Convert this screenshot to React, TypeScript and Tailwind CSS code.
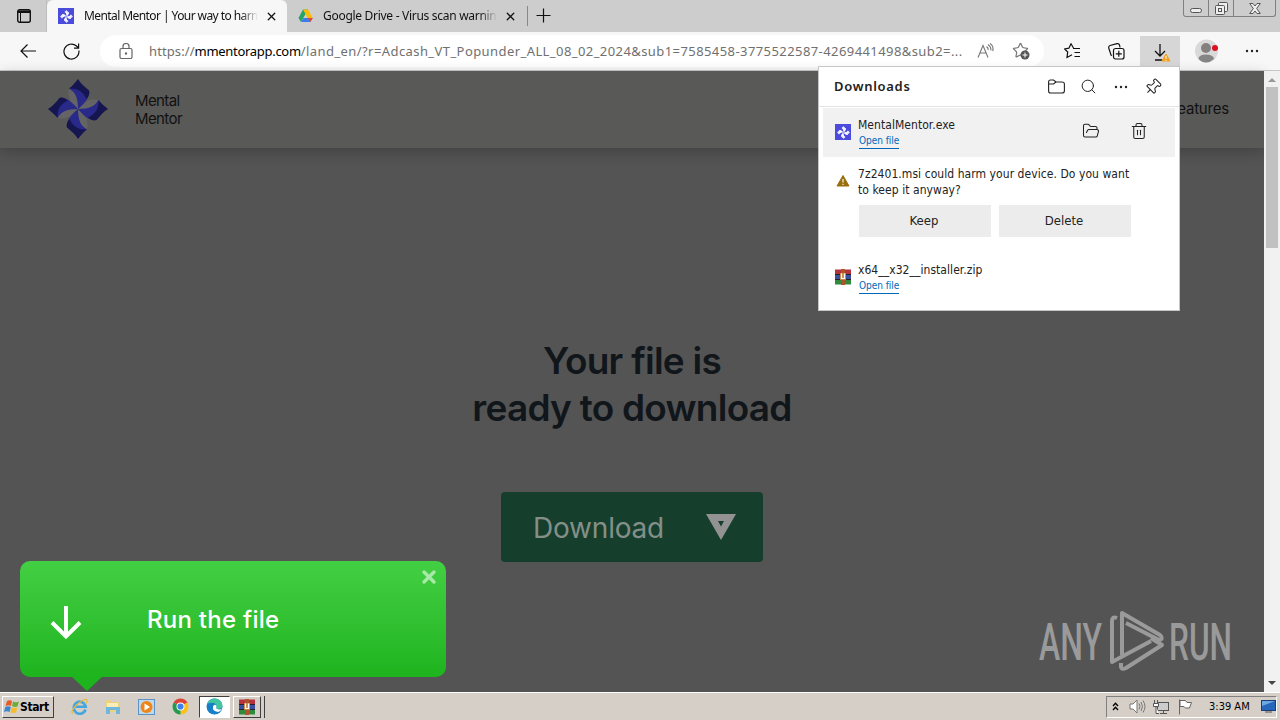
import { FolderOpen, Pin, Search, Star, Trash2, X } from "lucide-react";

const BLADES = [0, 90, 180, 270];

function Pinwheel({ size, light, mid, dark }: { size: number; light: string; mid: string; dark: string }) {
  return (
    <svg width={size} height={size} viewBox="0 0 60 60">
      {BLADES.map((angle) => (
        <path key={angle} transform={`rotate(${angle} 30 30)`} d="M21 9C19.5 17 21 23 30 30C32 20 29 13 21 9Z" fill={light} />
      ))}
      {BLADES.map((angle) => (
        <g key={angle} transform={`rotate(${angle} 30 30)`}>
          <path d="M21 9.5C27 13 30 18 30 30C36 25 42 19 41 11.5L30 6Z" fill={mid} />
          <path d="M30 0C27.5 3 24.5 7 21 9.5C29 9 35 12 38.5 20C41 17 42 14 41 11.5C37 8 32 4 30 0Z" fill={dark} />
        </g>
      ))}
    </svg>
  );
}

function MentorBadge() {
  return (
    <div className="flex h-4 w-4 shrink-0 items-center justify-center bg-[#4b4bdc]">
      <Pinwheel size={13} light="#4b4bdc" mid="#ffffff" dark="#e8e8ff" />
    </div>
  );
}

function DriveIcon() {
  return (
    <svg width="15" height="14" viewBox="0 0 15 14" className="shrink-0">
      <path d="M5 0.5H10L7.5 5L3 13L0.5 9Z" fill="#22a565" />
      <path d="M5 0.5H10L14.7 9H9.7Z" fill="#fbbc04" />
      <path d="M3 13L5.5 9H14.7L12.3 13Z" fill="#3b7ded" />
      <path d="M12.3 13L9.8 9H14.7Z" fill="#ea4335" />
    </svg>
  );
}

function WinRarIcon({ size }: { size: number }) {
  return (
    <svg width={size} height={size} viewBox="0 0 16 16">
      <path d="M0 0.5H16V5H0Z" fill="#b5333c" />
      <path d="M0 6H16V10H0Z" fill="#3c4f9e" />
      <path d="M0 11H16V15.5H0Z" fill="#2f8a3c" />
      <path d="M0 5H16V6H0ZM0 10H16V11H0Z" fill="#26222a" />
      <path d="M6 0H10V16H6Z" fill="#b0532a" />
      <path d="M5 4H11V11H5Z" fill="#c98548" />
      <path d="M6.5 4.5V9.5H9.5V4.5" fill="none" stroke="#fff" strokeWidth="1.2" />
    </svg>
  );
}

function WarningIcon({ size, fill }: { size: number; fill: string }) {
  return (
    <svg width={size} height={size} viewBox="0 0 14 14">
      <path d="M7 1.5L13 12H1Z" fill={fill} stroke={fill} strokeLinejoin="round" />
      <path d="M7 5V8.5M7 9.8V11" stroke="#fff" strokeWidth="1.1" />
    </svg>
  );
}

function TabStrip() {
  return (
    <div className="flex h-8 shrink-0 bg-[#cdcdcd] text-[12px] text-[#111]">
      <div className="flex w-[47px] items-center justify-center border-r border-[#bdbdbd] pl-px">
        <svg width="14" height="14" viewBox="0 0 14 14">
          <rect x="0.7" y="0.7" width="12.6" height="12.6" rx="2" fill="none" stroke="#111" strokeWidth="1.4" />
          <path d="M1 1.5H13V4H4V13H3V4H1Z" fill="#111" />
        </svg>
      </div>
      <div className="flex w-[240px] items-center rounded-t-md bg-[#f7f7f7] pl-[11px]">
        <MentorBadge />
        <span className="ml-[10px] w-[174px] overflow-hidden whitespace-nowrap bg-gradient-to-r from-[#111] from-90% to-transparent bg-clip-text tracking-[-0.58px] text-transparent">
          Mental Mentor | Your way to harm
        </span>
        <X size={13} strokeWidth={2.4} className="ml-[7px] shrink-0" />
      </div>
      <div className="flex w-[240px] items-center pl-[11px]">
        <DriveIcon />
        <span className="ml-[10px] w-[174px] overflow-hidden whitespace-nowrap bg-gradient-to-r from-[#111] from-90% to-transparent bg-clip-text tracking-[-0.29px] text-transparent">
          Google Drive - Virus scan warnin
        </span>
        <X size={13} strokeWidth={2.4} className="ml-[7px] shrink-0" />
      </div>
      <div className="mt-[6px] h-5 w-px bg-[#888]" />
      <svg width="15" height="15" viewBox="0 0 15 15" className="mt-2 ml-2">
        <path d="M7.5 0.5V14.5M0.5 7.5H14.5" stroke="#111" strokeWidth="1.2" />
      </svg>
      <div className="mr-1 ml-auto flex h-[17px] w-[93px] rounded-b-[3px] border border-t-0 border-[#808080]">
        <div className="flex w-[25px] justify-center border-r border-[#808080]">
          <div className="mt-2 h-[5px] w-3 rounded-sm border border-[#555] bg-[#eee]" />
        </div>
        <div className="flex w-[25px] justify-center border-r border-[#808080]">
          <svg width="13" height="13" viewBox="0 0 13 13" className="mt-[2px]" fill="#eee" stroke="#555">
            <rect x="3.5" y="0.5" width="9" height="9" rx="1" />
            <rect x="0.5" y="3.5" width="9" height="9" rx="1" />
            <rect x="3.5" y="6.5" width="3" height="3" />
          </svg>
        </div>
        <div className="flex flex-1 justify-center">
          <svg width="12" height="11" viewBox="0 0 12 11" className="mt-[3px]">
            <path d="M0.7 0.5H4L6 3L8 0.5H11.3L7.7 5.5L11.3 10.5H8L6 8L4 10.5H0.7L4.3 5.5Z" fill="#eee" stroke="#555" />
          </svg>
        </div>
      </div>
    </div>
  );
}

function Dots() {
  return (
    <svg width="14" height="4" viewBox="0 0 14 4" fill="#222">
      <circle cx="2" cy="2" r="1.2" />
      <circle cx="7" cy="2" r="1.2" />
      <circle cx="12" cy="2" r="1.2" />
    </svg>
  );
}

function Toolbar() {
  return (
    <div className="flex h-[39px] shrink-0 items-center border-b border-[#c8c8c8] bg-[#f7f7f7] text-[#111]">
      <svg width="17" height="14" viewBox="0 0 17 14" className="ml-5" fill="none" stroke="#111" strokeWidth="1.2">
        <path d="M16 7H1M7.5 0.5L1 7L7.5 13.5" />
      </svg>
      <svg width="17" height="17" viewBox="0 0 17 17" className="ml-[26px]" fill="none" stroke="#111" strokeWidth="1.2">
        <path d="M15.9 7.5A7.5 7.5 0 1 1 13.5 3L15.5 5M15.6 0.5V5.2H11" />
      </svg>
      <div className="ml-5 flex h-8 w-[944px] items-center rounded-full bg-white">
        <svg width="14" height="16" viewBox="0 0 14 16" className="ml-[19px]" fill="none" stroke="#666" strokeWidth="1.2">
          <rect x="1" y="5.5" width="12" height="10" rx="1.5" />
          <path d="M4 5.5V3.5A3 3 0 0 1 10 3.5V5.5" />
          <circle cx="7" cy="10.5" r="0.6" fill="#666" />
        </svg>
        <span className="ml-[16px] w-[817px] pt-px text-[13px] tracking-[0.42px] whitespace-nowrap text-[#707070]">
          <span className="tracking-[0.1px]">https://</span>
          <span className="tracking-[-0.3px] text-black">mmentorapp.com</span>
          /land_en/?r=Adcash_VT_Popunder_ALL_08_02_2024&amp;sub1=7585458-3775522587-4269441498&amp;sub2=...
        </span>
        <svg width="18" height="16" viewBox="0 0 18 16" className="ml-[11px]" fill="none" stroke="#777" strokeWidth="1.1">
          <path d="M1 14.5L6 2.5L11 14.5M2.8 10H9.2M9.5 3.5Q11.5 5 11.2 7M11 1.5Q14.5 4 13.8 7.5M13 0.5Q17 3 15.7 8" />
        </svg>
        <div className="ml-[17px] flex">
          <Star size={17} strokeWidth={1.7} color="#777" />
          <svg width="10" height="10" viewBox="0 0 10 10" className="mt-2 -ml-[9px]">
            <circle cx="5" cy="5" r="4.5" fill="#555" />
            <path d="M5 2.5V7.5M2.5 5H7.5" stroke="#fff" />
          </svg>
        </div>
      </div>
      <svg width="17" height="16" viewBox="0 0 17 16" className="ml-5" fill="none" stroke="#111" strokeWidth="1.2">
        <path d="M9.5 5L7 0.8L4.9 5.2L0.6 5.9L3.7 9L3 14.5L8 11.7M9 5.5H16M10.5 9.5H16M10.5 13.5H16" />
      </svg>
      <svg width="17" height="17" viewBox="0 0 17 17" className="ml-[27px]" fill="none" stroke="#111" strokeWidth="1.2">
        <path d="M4 12.5L3 12L0.7 5Q0.5 3 2 2.5L9 0.7Q11 0.3 11.5 2L12 4.5" />
        <rect x="5.5" y="5.5" width="10.5" height="10.5" rx="2" fill="#f7f7f7" />
        <path d="M10.8 7.7V13.8M7.8 10.8H13.8" />
      </svg>
      <div className="ml-[15px] flex h-[34px] w-10 items-center justify-center self-end bg-[#d6d6d6] pl-[3px]">
        <svg width="18" height="20" viewBox="0 0 18 20" fill="none">
          <path d="M7 1V13M2 8L7 13L12 8M2 17H9" stroke="#111" strokeWidth="1.3" />
          <path d="M13 11L17 18H9Z" fill="#f5a01d" stroke="#f5a01d" strokeLinejoin="round" />
          <path d="M13 13V16M13 17V18" stroke="#fff" />
        </svg>
      </div>
      <svg width="24" height="24" viewBox="0 0 24 24" className="ml-[15px]">
        <circle cx="11.5" cy="12" r="11.5" fill="#d9d9d9" />
        <circle cx="11" cy="9" r="5" fill="#858080" />
        <path d="M3.5 20Q3.5 15.5 11 15.5T19 20Q15 23.5 11 23.5T3.5 20Z" fill="#858585" />
        <circle cx="20" cy="9" r="3" fill="#dc1020" />
      </svg>
      <div className="ml-[26px] flex">
        <Dots />
      </div>
    </div>
  );
}

function OpenFile() {
  return (
    <span className="ml-px w-[40px] whitespace-nowrap border-b border-[#0067b8] text-[10px] leading-[15px] tracking-[-0.05px] text-[#0067b8]">
      Open file
    </span>
  );
}

function DownloadsPanel() {
  return (
    <div className="absolute top-[66px] left-[818px] h-[245px] w-[362px] border border-[#c6c6c6] bg-white font-['DejaVu_Sans_Condensed','DejaVu_Sans',sans-serif] text-[12px] text-[#222]">
      <div className="flex h-10 items-center border-b border-[#e4e4e4] pl-[15px]">
        <span className="w-[214px] pt-px font-['Noto_Sans',sans-serif] text-[13px] font-semibold tracking-[0.7px]">Downloads</span>
        <svg width="17" height="15" viewBox="0 0 17 15" fill="none" stroke="#222" strokeWidth="1.1">
          <path d="M0.6 3Q0.6 1 2.5 1H5.5L8 3H14Q16.4 3 16.4 5V12Q16.4 14 14 14H2.5Q0.6 14 0.6 12ZM0.6 5H5.5L8 3" />
        </svg>
        <Search size={17} strokeWidth={1.4} className="ml-[15px]" />
        <div className="ml-[17px] flex">
          <Dots />
        </div>
        <Pin size={18} strokeWidth={1.4} className="ml-4 rotate-45" />
      </div>
      <div className="mx-1 mt-px flex h-[49px] items-center bg-[#f1f1f1] pl-3">
        <div className="-mt-px">
          <MentorBadge />
        </div>
        <div className="ml-[7px] flex w-[224px] flex-col">
          <span className="leading-4 tracking-[0.05px]">MentalMentor.exe</span>
          <OpenFile />
        </div>
        <FolderOpen size={18} strokeWidth={1.4} className="-mt-[3px]" />
        <Trash2 size={18} strokeWidth={1.4} className="-mt-[3px] ml-[30px]" />
      </div>
      <div className="mt-[9px] flex pl-[17px]">
        <div className="mt-2 w-[22px]">
          <WarningIcon size={14} fill="#986f0b" />
        </div>
        <div>
          <p className="leading-4 tracking-[0.06px] whitespace-nowrap">
            7z2401.msi could harm your device. Do you want
            <br />
            to keep it anyway?
          </p>
          <div className="mt-[7px] ml-px flex gap-2 text-[13px]">
            <button className="h-8 w-[132px] bg-[#ececec] pr-[2px]">Keep</button>
            <button className="h-8 w-[132px] bg-[#ececec] pr-[2px]">Delete</button>
          </div>
        </div>
      </div>
      <div className="mt-6 flex items-center pl-4">
        <div className="-mt-px">
          <WinRarIcon size={16} />
        </div>
        <div className="ml-[7px] flex flex-col pt-px">
          <span className="leading-4 tracking-[0.06px]">x64__x32__installer.zip</span>
          <OpenFile />
        </div>
      </div>
    </div>
  );
}

function RunPopup() {
  return (
    <div className="absolute top-[561px] left-5 h-[116px] w-[426px] rounded-[10px] bg-gradient-to-b from-[#43cf43] to-[#1db41d] text-white">
      <svg width="32" height="34" viewBox="0 0 32 34" className="absolute top-[45px] left-[30px]" fill="none" stroke="#fff" strokeWidth="4">
        <path d="M16 0V30M2 16.5L16 30.5L30 16.5" />
      </svg>
      <span className="absolute top-[43px] left-[127px] font-['Inter',sans-serif] text-[24px] leading-8 font-medium tracking-[0.25px] whitespace-nowrap">
        Run the file
      </span>
      <X size={20} strokeWidth={4} className="absolute top-[6px] right-[7px] text-[#a8e8a8]" />
      <svg width="32" height="15" viewBox="0 0 32 15" className="absolute top-[115px] left-[51px]">
        <path d="M0 0H32L16 15Z" fill="#1db41d" />
      </svg>
    </div>
  );
}

function Watermark() {
  return (
    <svg width="204" height="64" viewBox="0 0 204 64" className="absolute top-[609px] left-[1038px]">
      <g fill="#9a9a9a" fontFamily="Roboto, sans-serif" fontSize="51" fontWeight="500">
        <text x="1" y="50.5" textLength="63" lengthAdjust="spacingAndGlyphs">ANY</text>
        <text x="131" y="50.5" textLength="63" lengthAdjust="spacingAndGlyphs">RUN</text>
      </g>
      <g fill="none" stroke="#9a9a9a" strokeWidth="4" strokeLinejoin="round">
        <path d="M79 9Q74 7 74 12V53L113 32" />
        <path d="M84 46V4L122 26Q126 30 121 31L88 14" />
        <path d="M83 54V58Q84 61 88 59L124 36L113 29" />
      </g>
    </svg>
  );
}

function Page() {
  return (
    <div className="flex min-h-0 flex-1">
      <main className="flex flex-1 flex-col items-center bg-[#545454] font-['Inter',sans-serif]">
        <header className="flex h-[77px] w-full shrink-0 items-center bg-[#595957] pl-12 text-[#111] shadow-[0_4px_14px_rgba(0,0,0,0.22)]">
          <div className="-mt-px flex">
            <Pinwheel size={60} light="#646466" mid="#29298a" dark="#15154f" />
          </div>
          <div className="ml-[27px] text-[15px] leading-[18px] tracking-[-0.6px]">
            Mental
            <br />
            Mentor
          </div>
          <span className="mr-[35px] ml-auto text-[15px] tracking-[-0.2px]">Features</span>
        </header>
        <h1 className="mt-[189px] text-center text-[37px] leading-[47px] font-semibold tracking-[-0.75px] whitespace-nowrap text-[#11161b]">
          Your file is
          <br />
          ready to download
        </h1>
        <button className="mt-[61px] flex h-[70px] w-[262px] shrink-0 items-center rounded-sm bg-[#153f2c] pl-8 text-[28px] text-[#858f89]">
          <span className="w-[173px] pt-[2px] text-left tracking-[-0.2px]">Download</span>
          <svg width="30" height="26" viewBox="0 0 30 26">
            <path fillRule="evenodd" d="M0 0H30L15 26ZM12 7L15 12.5L18 7Z" fill="#929292" />
          </svg>
        </button>
      </main>
      <div className="flex w-4 flex-col items-center bg-[#f1f1f1]">
        <svg width="16" height="16" viewBox="0 0 16 16">
          <path d="M4 11L8 7L12 11Z" fill="#999" />
        </svg>
        <div className="h-[161px] w-3 bg-[#c1c1c1]" />
        <svg width="16" height="16" viewBox="0 0 16 16" className="mt-auto">
          <path d="M4 5L8 9L12 5Z" fill="#444" />
        </svg>
      </div>
    </div>
  );
}

function Taskbar() {
  return (
    <footer className="flex h-7 shrink-0 items-center border-t border-white bg-[#d5cfc7] font-['DejaVu_Sans_Condensed','DejaVu_Sans',sans-serif] text-[12px] text-black">
      <div className="ml-[2px] flex h-[22px] w-[52px] items-center border border-t-white border-r-[#404040] border-b-[#404040] border-l-white pl-px">
        <svg width="16" height="15" viewBox="0 0 16 15">
          <path d="M3 2Q6 0.5 8 2L7 7Q5 5.5 1.5 7Z" fill="#e8592a" />
          <path d="M9 2.5Q12 4 15 2.5L13.5 7.5Q11 8.5 8 7Z" fill="#6cae3b" />
          <path d="M1.3 8Q4 6.5 6.8 8L5.5 13Q3 11.5 0 13Z" fill="#3b86d0" />
          <path d="M7.7 8.3Q10.5 9.8 13.3 8.5L12 13.5Q9 14.5 6.5 13.3Z" fill="#f6bd2b" />
        </svg>
        <span className="text-[12px] font-bold tracking-[-0.4px]">Start</span>
      </div>
      <svg width="17" height="17" viewBox="0 0 17 17" className="ml-[17px]" fill="none">
        <path d="M14.5 11.5A6 6 0 1 1 14.7 8.8H4.5" stroke="#45a5e0" strokeWidth="2.6" />
        <path d="M2 15.5Q-1 14 5 7.5Q12 1 15.5 1.5Q17 2.5 14.5 6" stroke="#e5b838" strokeWidth="1.2" />
      </svg>
      <svg width="17" height="16" viewBox="0 0 17 16" className="ml-4">
        <path d="M1 1H6L8 3H15V13H1Z" fill="#ecd27a" />
        <path d="M3 4H14V8H3Z" fill="#f7edb8" />
        <path d="M2 8H16V15H12V11H6V15H2Z" fill="#70b7db" />
      </svg>
      <svg width="17" height="16" viewBox="0 0 17 16" className="ml-[17px]">
        <rect x="0.5" y="0.5" width="16" height="15" fill="#bdd9ef" stroke="#5c92c6" />
        <circle cx="8.5" cy="8" r="6" fill="#ef8519" />
        <path d="M6.5 4.5L12 8L6.5 11.5Z" fill="#fff" />
      </svg>
      <svg width="17" height="17" viewBox="0 0 17 17" className="ml-[17px]">
        <path d="M8.5 8.5L1.6 4.5A8 8 0 0 1 15.4 4.5Z" fill="#dc4437" />
        <path d="M8.5 8.5L15.4 4.5A8 8 0 0 1 8.5 16.5Z" fill="#fbc116" />
        <path d="M8.5 8.5L8.5 16.5A8 8 0 0 1 1.6 4.5Z" fill="#24994f" />
        <circle cx="8.5" cy="8.5" r="4" fill="#fff" />
        <circle cx="8.5" cy="8.5" r="3.1" fill="#3f80ed" />
      </svg>
      <div className="ml-[10px] flex h-[22px] w-[31px] items-center justify-center border border-t-[#404040] border-r-white border-b-white border-l-[#404040] bg-white">
        <svg width="17" height="17" viewBox="0 0 17 17">
          <circle cx="8.5" cy="8.5" r="8" fill="#167fc7" />
          <path d="M1 6Q4 0 9 0.5Q16 1 16.5 8Q16 11 12 11Q9 11 10.5 8Q9 4 5 5Q2 5 1 6Z" fill="#43c5a0" />
          <path d="M10.5 8Q9 11 13 11.5Q15 11.5 16.5 10Q15 13 12 14Q6 13 7 8.5Q8.5 5.5 10.5 8Z" fill="#fff" />
        </svg>
      </div>
      <div className="ml-[3px] flex h-[22px] w-[28px] items-center justify-center border border-t-white border-r-[#404040] border-b-[#404040] border-l-white">
        <WinRarIcon size={16} />
      </div>
      <div className="ml-[2px] h-[22px] w-[2px] border-r border-[#404040]" />
      <div className="mr-[3px] ml-auto flex h-[22px] w-[171px] items-center border border-t-[#808080] border-r-white border-b-white border-l-[#808080]">
        <svg width="7" height="9" viewBox="0 0 7 9" className="ml-[5px]" fill="none" stroke="#000" strokeWidth="1.3">
          <path d="M1 4L3.5 1.2L6 4M1 8L3.5 5.2L6 8" />
        </svg>
        <svg width="17" height="15" viewBox="0 0 17 15" className="ml-[10px]" fill="#fff" stroke="#777">
          <path d="M1 5H4L8 1V14L4 10H1Z" />
          <path d="M10 4.5Q12 7.5 10 10.5M12 3Q15 7.5 12 12M14 1.5Q18 7.5 14 13.5" fill="none" />
        </svg>
        <svg width="17" height="16" viewBox="0 0 17 16" className="ml-[7px]" fill="#fff" stroke="#555">
          <rect x="4.5" y="3.5" width="11" height="8" fill="#ccc" />
          <path d="M7 14.5H14M10.5 11.5V14.5M1.5 1V4M4.5 1V4M0.5 4.5H5.5V7.5H0.5ZM3 7.5V14.5H6" />
        </svg>
        <svg width="16" height="16" viewBox="0 0 16 16" className="ml-[7px]" fill="#fff" stroke="#666">
          <path d="M2.5 0.5V15.5M3 1.5H8.5L10 3.5H14.5L12.5 9H8.5L7 7.5H3Z" />
        </svg>
        <span className="ml-[16px] w-[52px] pt-px text-[11px] whitespace-nowrap">3:39 AM</span>
        <svg width="15" height="13" viewBox="0 0 15 13" className="shrink-0">
          <rect x="0.5" y="0.5" width="14" height="10" fill="#2666bb" stroke="#1a3c79" />
          <path d="M1 1H14L1 6Z" fill="#6ca8e0" />
          <path d="M4 12H11" stroke="#555" />
        </svg>
      </div>
    </footer>
  );
}

export default function App() {
  return (
    <div className="relative flex h-[720px] w-[1280px] flex-col overflow-hidden font-['Noto_Sans',sans-serif]">
      <TabStrip />
      <Toolbar />
      <Page />
      <Taskbar />
      <RunPopup />
      <Watermark />
      <DownloadsPanel />
    </div>
  );
}
